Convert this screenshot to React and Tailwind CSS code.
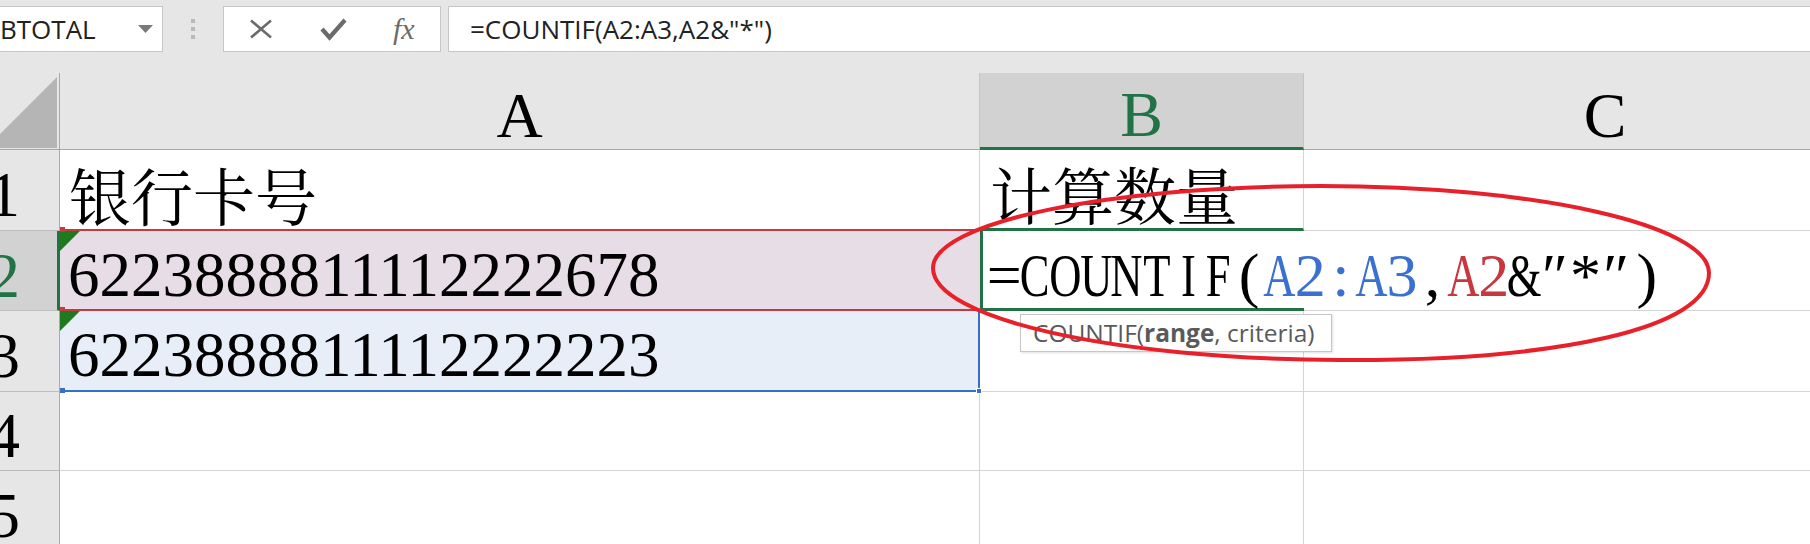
const SERIF = "font-['Liberation_Serif',serif]";
const CJK = "font-['Noto_Serif_CJK_SC','Liberation_Serif','Noto_Sans_CJK_SC',serif]";

const FORMULA = [
  { text: '=COUNTIF(', color: 'text-black' },
  { text: 'A2:A3', color: 'text-[#3a70cf]' },
  { text: ',', color: 'text-black' },
  { text: 'A2', color: 'text-[#c8363e]' },
  { text: '&″*″)', color: 'text-black' },
];

function TopBar() {
  return (
    <div className="h-[73px] flex items-start pt-[6px]">
      {/* Name box */}
      <div className="w-[163px] h-[46px] bg-white border border-l-0 border-[#c6c6c6] flex items-center justify-between pr-[9px]">
        <span className="text-[26px] leading-none text-[#222]">BTOTAL</span>
        <svg width="15" height="8" viewBox="0 0 15 8">
          <path d="M0 0 H15 L7.5 8 Z" fill="#7a7a7a" />
        </svg>
      </div>

      {/* Grip dots */}
      <div className="ml-[28px] mt-[13px] flex flex-col gap-[4px]">
        <span className="w-[4px] h-[4px] bg-[#b9b9b9]" />
        <span className="w-[4px] h-[4px] bg-[#b9b9b9]" />
        <span className="w-[4px] h-[4px] bg-[#b9b9b9]" />
      </div>

      {/* Cancel / enter / fx */}
      <div className="ml-[28px] w-[218px] h-[46px] bg-white border border-[#c6c6c6] flex items-center">
        <svg className="ml-[25px]" width="24" height="20" viewBox="0 0 24 20">
          <path d="M2 1.5 L22 18.5 M22 1.5 L2 18.5" stroke="#6b6b6b" strokeWidth="2.6" fill="none" />
        </svg>
        <svg className="ml-[47px]" width="27" height="23" viewBox="0 0 27 23">
          <path d="M2 11 L9.5 19.5 L25 2" stroke="#6b6b6b" strokeWidth="4.2" fill="none" />
        </svg>
        <span className={`ml-[46px] ${SERIF} italic text-[30px] leading-none text-[#6b6b6b]`}>fx</span>
      </div>

      {/* Formula input */}
      <div className="ml-[7px] flex-1 h-[46px] bg-white border border-r-0 border-[#c6c6c6] flex items-center pl-[21px]">
        <span className="text-[26px] leading-none text-[#222]">{'=COUNTIF(A2:A3,A2&"*")'}</span>
      </div>
    </div>
  );
}

function RowNum({ n, active }) {
  return (
    <div
      className={`overflow-hidden flex items-center pt-[10px] border-b border-b-[#bdbdbd] ${
        active
          ? 'bg-[#d2d2d2] border-r-[3px] border-r-[#217346] text-[#217346]'
          : 'bg-[#e6e6e6] border-r border-r-[#a9a9a9] text-black'
      }`}
    >
      <span className={`${SERIF} text-[64px] leading-none ml-[-12px]`}>{n}</span>
    </div>
  );
}

function Formula() {
  return (
    <span className={`${SERIF} text-[62px] leading-none whitespace-nowrap`}>
      {FORMULA.map((part, p) =>
        [...part.text].map((ch, i) => (
          <span key={`${p}-${i}`} className={`inline-flex w-[30.6px] justify-center ${part.color}`}>
            {/[A-Z&]/.test(ch) ? <span className="inline-block scale-x-[0.72]">{ch}</span> : ch}
          </span>
        ))
      )}
    </span>
  );
}

const cellText = `${SERIF} text-[63px] leading-none text-black`;

export default function App() {
  return (
    <div className="relative w-[1810px] h-[544px] overflow-hidden bg-[#e6e6e6] font-['Open_Sans',sans-serif]">
      <TopBar />

      <div className="w-[1906px] grid grid-cols-[60px_920px_324px_602px] grid-rows-[77px_81px_80px_81px_79px_80px] bg-white">
        {/* Column headers */}
        <div className="bg-[#e6e6e6] border-r border-b border-[#a9a9a9] overflow-hidden">
          <svg width="59" height="76" viewBox="0 0 59 76">
            <polygon points="57,4 57,75 -14,75" fill="#b5b5b5" />
          </svg>
        </div>
        <div className="bg-[#e6e6e6] border-b border-b-[#a9a9a9] border-r border-r-[#c4c4c4] flex items-center justify-center pt-[10px]">
          <span className={`${SERIF} text-[64px] leading-none`}>A</span>
        </div>
        <div className="bg-[#d2d2d2] border-b-[3px] border-b-[#217346] border-r border-r-[#c4c4c4] flex items-center justify-center pt-[10px]">
          <span className={`${SERIF} text-[64px] leading-none text-[#217346]`}>B</span>
        </div>
        <div className="bg-[#e6e6e6] border-b border-b-[#a9a9a9] flex items-center justify-center pt-[10px]">
          <span className={`${SERIF} text-[64px] leading-none`}>C</span>
        </div>

        {/* Row 1 */}
        <RowNum n="1" />
        <div className="border-r border-r-[#d4d4d4] border-b-2 border-b-[#c43a41] flex items-center pl-[9px] pt-[10px]">
          <span className={`${CJK} text-[62px] leading-none text-black`}>银行卡号</span>
        </div>
        <div className="border-r border-r-[#d4d4d4] border-b-[3px] border-b-[#217346] flex items-center pl-[10px] pt-[10px]">
          <span className={`${CJK} text-[62px] leading-none text-black`}>计算数量</span>
        </div>
        <div className="border-b border-b-[#d4d4d4]" />

        {/* Row 2 */}
        <RowNum n="2" active />
        <div className="relative bg-[#e6dde6] border-b-2 border-b-[#c43a41] flex items-center pl-[8px] pt-[10px]">
          <span className="absolute left-0 top-0 w-0 h-0 border-t-[20px] border-t-[#1f7a1f] border-r-[20px] border-r-transparent" />
          <span className="absolute left-0 top-[-4px] w-[5px] h-[5px] bg-[#c43a41]" />
          <span className="absolute left-0 bottom-[-3px] w-[5px] h-[5px] bg-[#c43a41]" />
          <span className={cellText}>6223888811112222678</span>
        </div>
        <div className="border-l-[3px] border-l-[#217346] border-b-[3px] border-b-[#217346] flex items-center pl-[6px] pt-[10px] overflow-visible">
          <Formula />
        </div>
        <div className="border-b border-b-[#d4d4d4]" />

        {/* Row 3 */}
        <RowNum n="3" />
        <div className="relative bg-[#e8eef8] border-b-2 border-b-[#3a6fc8] border-r-2 border-r-[#3a6fc8] flex items-center pl-[8px] pt-[10px]">
          <span className="absolute left-0 top-0 w-0 h-0 border-t-[20px] border-t-[#1f7a1f] border-r-[20px] border-r-transparent" />
          <span className="absolute left-0 bottom-[-3px] w-[5px] h-[5px] bg-[#3a6fc8]" />
          <span className="absolute right-[-4px] bottom-[-4px] w-[6px] h-[6px] bg-[#3a6fc8] border border-white" />
          <span className={cellText}>6223888811112222223</span>
        </div>
        <div className="border-r border-r-[#d4d4d4] border-b border-b-[#d4d4d4]" />
        <div className="border-b border-b-[#d4d4d4]" />

        {/* Row 4 */}
        <RowNum n="4" />
        <div className="border-r border-r-[#d4d4d4] border-b border-b-[#d4d4d4]" />
        <div className="border-r border-r-[#d4d4d4] border-b border-b-[#d4d4d4]" />
        <div className="border-b border-b-[#d4d4d4]" />

        {/* Row 5 */}
        <RowNum n="5" />
        <div className="border-r border-r-[#d4d4d4] border-b border-b-[#d4d4d4]" />
        <div className="border-r border-r-[#d4d4d4] border-b border-b-[#d4d4d4]" />
        <div className="border-b border-b-[#d4d4d4]" />
      </div>

      {/* Function tooltip */}
      <div className="absolute left-[1020px] top-[314px] w-[312px] h-[38px] bg-white border border-[#c6c6c6] shadow-[1px_1px_2px_rgba(0,0,0,0.12)] flex items-center pl-[12px] text-[24.5px] leading-none text-[#5a5a5a] whitespace-nowrap">
        COUNTIF(<span className="font-bold">range</span>, criteria)
      </div>

      {/* Hand-drawn annotation */}
      <svg className="absolute inset-0 pointer-events-none" width="1810" height="544" viewBox="0 0 1810 544">
        <path
          d="M1321 186 C1535 186 1709 225 1709 273 C1709 328 1560 361 1340 360 C1110 359 933 318 933 268 C933 223 1107 186 1321 186 Z"
          fill="none"
          stroke="#e8202a"
          strokeWidth="4"
        />
      </svg>
    </div>
  );
}
